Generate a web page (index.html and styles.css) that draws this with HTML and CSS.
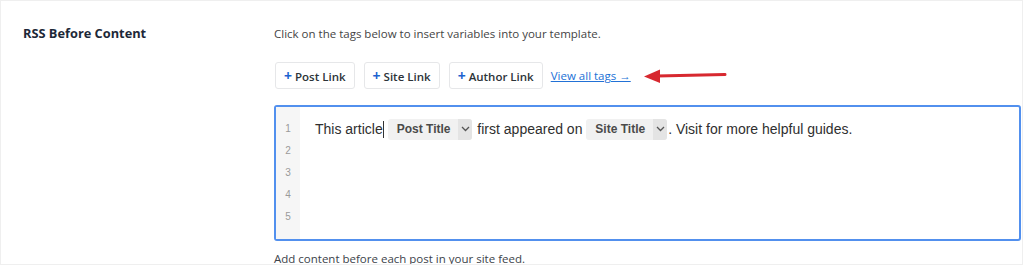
FILE: index.html
```html
<!DOCTYPE html>
<html lang="en">
<head>
  <meta charset="UTF-8">
  <title>RSS Before Content</title>
  <link rel="stylesheet" href="styles.css">
</head>
<body>

  <div class="settings-row">
    <div class="row-label">RSS Before Content</div>

    <div class="row-field">
      <p class="hint">Click on the tags below to insert variables into your template.</p>

      <div class="tag-bar">
        <button class="tag-btn"><span class="plus">+</span> Post Link</button>
        <button class="tag-btn"><span class="plus">+</span> Site Link</button>
        <button class="tag-btn"><span class="plus">+</span> Author Link</button>
        <a href="#" class="all-tags">View all tags &rarr;</a>
        <svg class="callout-arrow" width="84" height="16" viewBox="0 0 84 16">
          <line x1="14" y1="8" x2="82" y2="6.5" stroke="#d7282f" stroke-width="3" stroke-linecap="round"/>
          <polygon points="1,8.5 17,1.5 17,15" fill="#d7282f"/>
        </svg>
      </div>

      <div class="editor">
        <div class="gutter">
          <span>1</span>
          <span>2</span>
          <span>3</span>
          <span>4</span>
          <span>5</span>
        </div>
        <div class="lines">
          <div class="line">This article<span class="caret"></span><span class="chip"><span class="chip-name">Post Title</span><span class="chip-drop"><svg width="9" height="6" viewBox="0 0 9 6"><path d="M1 1l3.5 3.5L8 1" fill="none" stroke="#555" stroke-width="1.3"/></svg></span></span> first appeared on <span class="chip"><span class="chip-name">Site Title</span><span class="chip-drop"><svg width="9" height="6" viewBox="0 0 9 6"><path d="M1 1l3.5 3.5L8 1" fill="none" stroke="#555" stroke-width="1.3"/></svg></span></span>. Visit for more helpful guides.</div>
          <div class="line"></div>
          <div class="line"></div>
          <div class="line"></div>
          <div class="line"></div>
        </div>
      </div>

      <p class="help">Add content before each post in your site feed.</p>
    </div>
  </div>

</body>
</html>
```

FILE: styles.css
```css
body {
  margin: 0;
  font-family: "Open Sans", "Liberation Sans", Arial, sans-serif;
  background: #fff;
  color: #3c434a;
}

.settings-row {
  display: flex;
  height: 265px;
  border: 1px solid #efefef;
  box-sizing: border-box;
  width: 1023px;
  overflow: hidden;
}

.row-label {
  width: 251px;
  padding: 23px 0 0 22px;
  font-size: 12.8px;
  font-weight: 700;
  color: #1d2838;
}

.row-field {
  flex: 1;
  padding-top: 25px;
}

.hint {
  margin: 0 0 21px;
  font-size: 11.5px;
  color: #444;
}

.tag-bar {
  display: flex;
  align-items: center;
  gap: 9px;
  margin-bottom: 16px;
  padding-left: 1px;
}

.tag-btn {
  height: 27px;
  padding: 0 8px;
  background: #fff;
  border: 1px solid #e6e7e9;
  border-radius: 3px;
  font-family: inherit;
  font-size: 11.5px;
  font-weight: 600;
  color: #2c3338;
  cursor: pointer;
}

.plus {
  color: #1d63d0;
  font-weight: 700;
  font-size: 14px;
}

.all-tags {
  font-size: 11.5px;
  color: #2271d6;
  margin-left: -1px;
}

.callout-arrow {
  margin-left: 3px;
}

.editor {
  display: flex;
  width: 747px;
  height: 136px;
  border: 2px solid #5290ee;
  border-radius: 3px;
  box-sizing: border-box;
}

.gutter {
  width: 24px;
  background: #f6f6f6;
  padding-top: 11px;
  display: flex;
  flex-direction: column;
  align-items: center;
}

.gutter span {
  height: 22px;
  line-height: 22px;
  font-family: "Liberation Sans", Arial, sans-serif;
  font-size: 10px;
  color: #9a9a9a;
}

.lines {
  flex: 1;
  padding: 11px 0 0 15px;
}

.line {
  height: 22px;
  line-height: 22px;
  font-family: "Liberation Sans", Arial, sans-serif;
  font-size: 14px;
  color: #2f2f2f;
  display: flex;
  align-items: center;
  white-space: pre;
}

.caret {
  display: inline-block;
  width: 1px;
  height: 17px;
  background: #333;
  margin-right: 4px;
}

.chip {
  display: inline-flex;
  align-items: stretch;
  height: 21px;
  background: #f1f1f1;
  border-radius: 3px;
  margin-right: 1px;
  overflow: hidden;
}

.chip-name {
  padding: 0 8px 0 9px;
  font-size: 12px;
  font-weight: 700;
  color: #4a4a4a;
  line-height: 21px;
}

.chip-drop {
  width: 14px;
  background: #e4e4e4;
  display: flex;
  align-items: center;
  justify-content: center;
}

.help {
  margin: 10px 0 0;
  font-size: 11.5px;
  color: #3c434a;
}
```
